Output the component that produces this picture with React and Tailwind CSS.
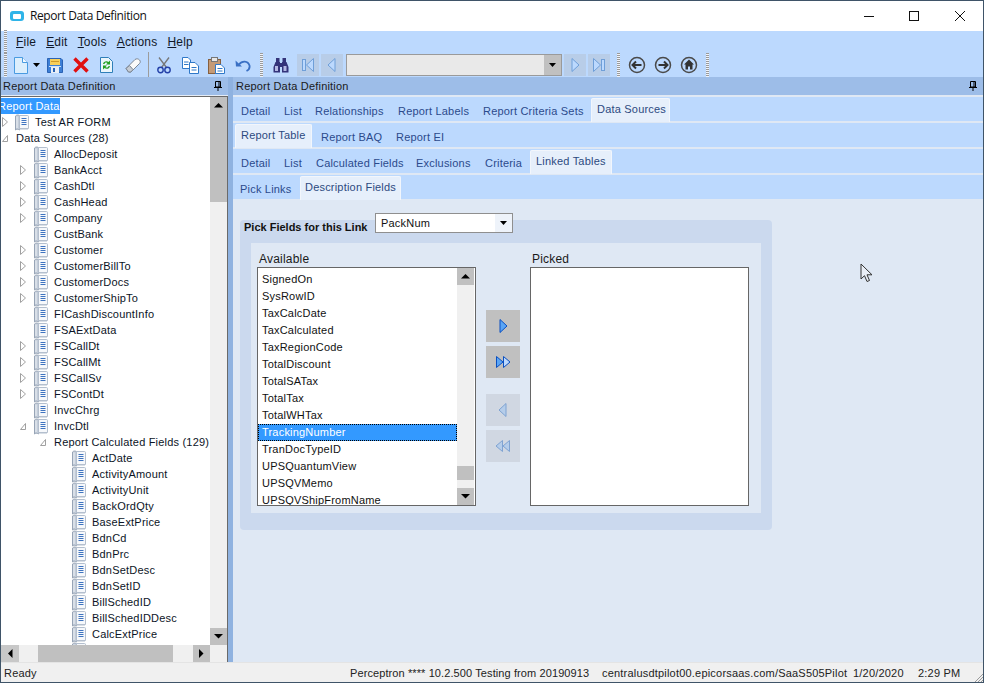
import React from "react";

// tree rows: kind picks indent, exp = closed/open/none
const treeRows = [
  ["l0", "Test AR FORM", "closed"],
  ["l1", "Data Sources (28)", "open"],
  ["l2", "AllocDeposit", ""],
  ["l2", "BankAcct", "closed"],
  ["l2", "CashDtl", "closed"],
  ["l2", "CashHead", "closed"],
  ["l2", "Company", "closed"],
  ["l2", "CustBank", ""],
  ["l2", "Customer", "closed"],
  ["l2", "CustomerBillTo", "closed"],
  ["l2", "CustomerDocs", "closed"],
  ["l2", "CustomerShipTo", "closed"],
  ["l2", "FICashDiscountInfo", ""],
  ["l2", "FSAExtData", ""],
  ["l2", "FSCallDt", "closed"],
  ["l2", "FSCallMt", "closed"],
  ["l2", "FSCallSv", "closed"],
  ["l2", "FSContDt", "closed"],
  ["l2", "InvcChrg", ""],
  ["l2", "InvcDtl", "open"],
  ["l3", "Report Calculated Fields (129)", "open"],
  ["l4", "ActDate", ""],
  ["l4", "ActivityAmount", ""],
  ["l4", "ActivityUnit", ""],
  ["l4", "BackOrdQty", ""],
  ["l4", "BaseExtPrice", ""],
  ["l4", "BdnCd", ""],
  ["l4", "BdnPrc", ""],
  ["l4", "BdnSetDesc", ""],
  ["l4", "BdnSetID", ""],
  ["l4", "BillSchedID", ""],
  ["l4", "BillSchedIDDesc", ""],
  ["l4", "CalcExtPrice", ""],
  ["l4", "", ""],
];

const available = [
  "SignedOn",
  "SysRowID",
  "TaxCalcDate",
  "TaxCalculated",
  "TaxRegionCode",
  "TotalDiscount",
  "TotalSATax",
  "TotalTax",
  "TotalWHTax",
  "TrackingNumber",
  "TranDocTypeID",
  "UPSQuantumView",
  "UPSQVMemo",
  "UPSQVShipFromName",
];

const Grip = ({ className = "" }) => (
  <div className={"w-[3px] h-[24px] flex-none bg-[repeating-linear-gradient(#9a9a9a_0_1px,#eef3fb_1px_2px)] " + className} />
);

function Expander({ type }) {
  if (type === "closed")
    return (
      <svg width="6" height="10" viewBox="0 0 6 10" className="flex-none">
        <path d="M.5.5 5.5 5 .5 9.500Z" fill="#fff" stroke="#a0a0a0" />
      </svg>
    );
  if (type === "open")
    return (
      <svg width="6" height="10" viewBox="0 0 6 10" className="flex-none">
        <path d="M5.500 2.500V8.500H.5Z" fill="#fff" stroke="#a0a0a0" />
      </svg>
    );
  return <div className="w-[6px] flex-none" />;
}

const BookIcon = () => (
  <svg width="16" height="17" viewBox="0 0 16 17" className="flex-none">
    <path d="M1.500 2C2.500 .8 4 .8 5.500 1.500V16C4 15 2.500 15 1.500 16Z" fill="#c3ccd8" stroke="#97a4b6" />
    <path d="M3 2.500V14" stroke="#eef2f7" />
    <path d="M5.500 1.500H13.500C14.500 1.500 14.500 2 14.500 3V14.500H5.500Z" fill="#f6f8fb" stroke="#b4bfce" />
    <path d="M7.500 4.500H12.500M7.500 6.500H12.500M7.500 8.500H12.500M7.500 10.500H12.500" stroke="#3f74c0" />
    <path d="M5 15H14" stroke="#b4bfce" />
  </svg>
);

function TreeRow({ kind, label, exp }) {
  return (
    <div className="flex items-center h-[16px] leading-[16px] whitespace-nowrap">
      {kind === "l0" && (
        <>
          <div className="ml-[1px]"><Expander type={exp} /></div>
          <div className="ml-[6px] mr-[5px]"><BookIcon /></div>
        </>
      )}
      {kind === "l1" && (
        <>
          <div className="ml-[1px] mr-[8px]"><Expander type={exp} /></div>
        </>
      )}
      {kind === "l2" && (
        <>
          <div className="ml-[19px]"><Expander type={exp} /></div>
          <div className="ml-[7px] mr-[5px]"><BookIcon /></div>
        </>
      )}
      {kind === "l3" && (
        <div className="ml-[39px] mr-[8px]"><Expander type={exp} /></div>
      )}
      {kind === "l4" && (
        <div className="ml-[70px] mr-[5px]"><BookIcon /></div>
      )}
      <span className="text-[#0c1426]">{label}</span>
    </div>
  );
}

const Arrow = ({ dir }) => {
  const d = {
    up: "M0 4.500 4.500 0 9 4.500Z",
    down: "M0 0H9L4.500 4.500Z",
    left: "M4.500 0V9L0 4.500Z",
    right: "M0 0V9L4.500 4.500Z",
  }[dir];
  const tall = dir === "left" || dir === "right";
  return (
    <svg width={tall ? 5 : 9} height={tall ? 9 : 5} viewBox={tall ? "0 0 5 9" : "0 0 9 5"}>
      <path d={d} fill="#000" />
    </svg>
  );
};

function NavBox({ kind }) {
  return (
    <div className="w-[22px] h-[22px] flex-none flex items-center justify-center bg-[#b8cde8]">
      <svg width="16" height="16" viewBox="0 0 16 16" fill="#bcd9fe" stroke="#6f9fd8">
        {kind === "first" && <><rect x="2.500" y="2.500" width="3" height="11" /><path d="M13.500 1.500V14.500L6.500 8Z" /></>}
        {kind === "prev" && <path d="M11 1.500V14.500L4 8Z" />}
        {kind === "next" && <path d="M5 1.500V14.500L12 8Z" />}
        {kind === "last" && <><path d="M2.500 1.500V14.500L9.500 8Z" /><rect x="10.500" y="2.500" width="3" height="11" /></>}
      </svg>
    </div>
  );
}

function RoundIcon({ kind }) {
  return (
    <div className="w-[26px] flex-none flex justify-center">
      <svg width="18" height="18" viewBox="0 0 18 18">
        <circle cx="9" cy="9" r="7.500" fill="none" stroke="#4a4a4a" strokeWidth="1.500" />
        {kind === "back" && <path d="M13.500 9H5M8 5.500 4.500 9 8 12.500" fill="none" stroke="#333" strokeWidth="2" />}
        {kind === "fwd" && <path d="M4.500 9H13M10 5.500 13.500 9 10 12.500" fill="none" stroke="#333" strokeWidth="2" />}
        {kind === "home" && <path d="M9 3.500 14 8.500H12.500V13.500H10V10.500H8V13.500H5.500V8.500H4Z" fill="#333" />}
      </svg>
    </div>
  );
}

function Toolbar() {
  return (
    <div className="flex items-center h-[24px] pl-[3px]">
      <Grip />
      <div className="ml-[3px] w-[22px] flex-none flex justify-center">
        <svg width="14" height="17" viewBox="0 0 14 17">
          <path d="M.5.5H8.500L13.500 5.500V16.500H.5Z" fill="#dceefc" stroke="#4a9be0" />
          <path d="M8.500.5V5.500H13.500" fill="#f4faff" stroke="#4a9be0" />
        </svg>
      </div>
      <div className="w-[9px] flex-none flex justify-center"><svg width="7" height="4" viewBox="0 0 7 4"><path d="M0 0H7L3.500 4Z" fill="#000" /></svg></div>
      <div className="w-[27px] flex-none flex justify-center">
        <svg width="16" height="15" viewBox="0 0 16 15">
          <path d="M.5.5H14L15.500 2V14.500H.5Z" fill="#3c7fd6" stroke="#2a62b4" />
          <rect x="3" y="1" width="10" height="6" fill="#f8cf5a" />
          <rect x="4" y="3" width="8" height="1" fill="#d09a28" />
          <rect x="2" y="8" width="12" height="1" fill="#cfe2f8" />
          <rect x="4" y="9" width="8" height="6" fill="#e8eef6" />
          <rect x="6" y="10" width="2" height="4" fill="#2a62b4" />
        </svg>
      </div>
      <div className="w-[25px] flex-none flex justify-center">
        <svg width="16" height="16" viewBox="0 0 16 16"><path d="M1.500 1.500 14.500 14.500M14.500 1.500 1.500 14.500" stroke="#e01010" strokeWidth="3.400" /></svg>
      </div>
      <div className="w-[27px] flex-none flex justify-center">
        <svg width="13" height="16" viewBox="0 0 13 16">
          <path d="M.5.5H8.500L12.500 4.500V15.500H.5Z" fill="#eaf5fb" stroke="#2f7fb8" />
          <path d="M3 7C3.500 4 7 3.500 8.500 5L10 3.500V7.500H6L7.500 6C6.500 5 4.500 5.500 4.500 7Z" fill="#23a023" />
          <path d="M10 9C9.500 12 6 12.500 4.500 11L3 12.500V8.500H7L5.500 10C6.500 11 8.500 10.500 8.500 9Z" fill="#23a023" />
        </svg>
      </div>
      <div className="w-[26px] flex-none flex justify-center">
        <svg width="16" height="15" viewBox="0 0 16 15">
          <path d="M1 10.500 10 1.500C11.500 .5 13 .5 14.500 2C15.500 3 15.500 4.500 14.500 5.500L6 14H3.500Z" fill="#fafafa" stroke="#7b8694" />
          <path d="M1 10.500 4.500 7.500 8 11.500 6 14H3.500Z" fill="#c6ccd4" stroke="#7b8694" />
        </svg>
      </div>
      <div className="ml-[2px] w-[1px] h-[26px] flex-none bg-[#9c9c9c]" />
      <div className="ml-[2px] w-[26px] flex-none flex justify-center">
        <svg width="14" height="17" viewBox="0 0 14 17" fill="none">
          <path d="M2 .5 9.500 10.500M12 .5 4.500 10.500" stroke="#777" strokeWidth="1.300" />
          <circle cx="3.500" cy="13" r="2.700" stroke="#2340a8" strokeWidth="1.400" />
          <circle cx="10.500" cy="13" r="2.700" stroke="#2340a8" strokeWidth="1.400" />
        </svg>
      </div>
      <div className="w-[26px] flex-none flex justify-center">
        <svg width="17" height="17" viewBox="0 0 17 17">
          <path d="M.5.5H6L8.500 3V11.500H.5Z" fill="#fff" stroke="#2f78c8" />
          <path d="M7.500 5.500H13L16.500 9V16.500H7.500Z" fill="#fff" stroke="#2f78c8" />
          <path d="M9.500 10.500H14.500M9.500 13H14.500M2 5H6.500M2 7.500H6.500" stroke="#2f78c8" />
        </svg>
      </div>
      <div className="w-[27px] flex-none flex justify-center">
        <svg width="17" height="17" viewBox="0 0 17 17">
          <rect x=".5" y="2.500" width="12" height="14" fill="#c49a76" stroke="#86603f" />
          <rect x="3.500" y=".5" width="6" height="4" fill="#e6e6e6" stroke="#777" />
          <path d="M7.500 7.500H13L16.500 11V16.500H7.500Z" fill="#fff" stroke="#2f78c8" />
          <path d="M9.500 11.500H14.500M9.500 14H14.500" stroke="#2f78c8" />
        </svg>
      </div>
      <div className="w-[26px] flex-none flex justify-center">
        <svg width="16" height="13" viewBox="0 0 16 13" fill="none">
          <path d="M4 5.500C7 1.500 13 1.500 14.500 6.500C15 9 13.500 11 11.500 12" stroke="#3a70c4" strokeWidth="1.800" />
          <path d="M.5 1.500 1 7.500H7Z" fill="#3a70c4" />
        </svg>
      </div>
      <Grip className="ml-[4px]" />
      <div className="ml-[5px] w-[26px] flex-none flex justify-center">
        <svg width="16" height="15" viewBox="0 0 16 15" fill="#33337a">
          <rect x="3" y="0" width="3.500" height="4" />
          <rect x="9.500" y="0" width="3.500" height="4" />
          <path d="M2.500 4H7V14.500H.5V9ZM9 4H13.500L15.500 9V14.500H9Z" />
          <rect x="7" y="5" width="2" height="4" />
          <rect x="2" y="8" width="3" height="5" fill="#b4b8e4" />
          <rect x="10.500" y="8" width="3" height="5" fill="#b4b8e4" />
        </svg>
      </div>
      <div className="ml-[3px]"><NavBox kind="first" /></div>
      <div className="ml-[2px]"><NavBox kind="prev" /></div>
      <div className="ml-[3px] w-[216px] h-[22px] flex-none flex border border-[#9a9a9a] bg-[#e9e9e9]">
        <div className="flex-1" />
        <div className="w-[17px] bg-[#c0c0c0] flex items-center justify-center"><svg width="7" height="4" viewBox="0 0 7 4"><path d="M0 0H7L3.500 4Z" fill="#000" /></svg></div>
      </div>
      <div className="ml-[2px]"><NavBox kind="next" /></div>
      <div className="ml-[2px]"><NavBox kind="last" /></div>
      <Grip className="ml-[7px]" />
      <div className="ml-[4px]"><RoundIcon kind="back" /></div>
      <RoundIcon kind="fwd" />
      <RoundIcon kind="home" />
      <Grip className="ml-[4px]" />
    </div>
  );
}

const Pin = () => (
  <svg width="8" height="10" viewBox="0 0 8 10">
    <path d="M1.500.5H6.500V6H1.500Z" fill="none" stroke="#000" />
    <path d="M0 6H8V7H0ZM3.500 7H4.500V10H3.500ZM4.500 1H5.500V6H4.500Z" fill="#000" />
  </svg>
);

function Tab({ label, w, active }) {
  if (active)
    return (
      <div className={"h-[24px] mt-[1px] flex-none px-[5px] pt-[2px] leading-[16px] rounded-t-[2px] bg-[#e6effb] text-[#2c4a80] whitespace-nowrap border-t border-x border-[#f2f6fc] " + w}>
        {label}
      </div>
    );
  return (
    <div className={"h-[24px] flex-none px-[6px] pt-[6px] leading-[16px] text-[#2b4a8c] whitespace-nowrap " + w}>
      {label}
    </div>
  );
}

const TabRow = ({ className = "", children }) => (
  <div className={"h-[24px] flex-none flex bg-[#bcd9fe] " + className}>{children}</div>
);

function SideButton({ kind }) {
  const on = kind === "r" || kind === "rr";
  return (
    <div className={"w-[34px] h-[32px] flex items-center justify-center " + (on ? "bg-[#c0c0c0]" : "bg-[#d0d7e2]")}>
      <svg width="16" height="16" viewBox="0 0 16 16" fill={on ? "#5aa5f5" : "#b5cdea"} stroke={on ? "#0a4fc0" : "#7fa3d2"}>
        {kind === "r" && <path d="M5 1.500V14.500L12 8Z" />}
        {kind === "rr" && <><path d="M1.500 2.500V13.500L8 8Z" /><path d="M8.500 2.500V13.500L15 8Z" fill="#bcd9fe" /></>}
        {kind === "l" && <path d="M11 1.500V14.500L4 8Z" />}
        {kind === "ll" && <><path d="M7.500 2.500V13.500L1 8Z" /><path d="M14.500 2.500V13.500L8 8Z" /></>}
      </svg>
    </div>
  );
}

const ListButton = ({ dir, className = "" }) => (
  <div className={"w-[17px] h-[17px] flex-none bg-[#c0c0c0] flex items-center justify-center " + className}>
    <Arrow dir={dir} />
  </div>
);

export default function App() {
  return (
    <div className="relative w-[984px] h-[683px] flex flex-col overflow-hidden border border-[#3f5468] bg-white text-[11px] tracking-[0.2px] text-black font-['Liberation_Sans',Arial,sans-serif]">
      {/* title bar */}
      <div className="h-[30px] flex-none flex items-center bg-white">
        <div className="ml-[9px] w-[14px] h-[10px] rounded-[3px] bg-[#2fb4e8] flex items-center justify-center">
          <div className="w-[8px] h-[5px] rounded-[1px] bg-white" />
        </div>
        <span className="ml-[6px] text-[12px] text-[#111] font-['Open_Sans',sans-serif] tracking-[-0.4px]">Report Data Definition</span>
        <div className="ml-auto flex items-center">
          <svg width="10" height="10" viewBox="0 0 10 10" className="mr-[35px]"><path d="M0 5.500H10" stroke="#111" /></svg>
          <svg width="10" height="10" viewBox="0 0 10 10" className="mr-[36px]"><rect x=".5" y=".5" width="9" height="9" fill="none" stroke="#111" /></svg>
          <svg width="10" height="10" viewBox="0 0 10 10" className="mr-[18px]"><path d="M0 0 10 10M10 0 0 10" stroke="#111" strokeWidth="1" /></svg>
        </div>
      </div>

      {/* menu + toolbar */}
      <div className="h-[46px] flex-none flex flex-col bg-[#bcd9fe]">
        <div className="h-[22px] flex items-center pl-[3px] text-[12px] text-[#101828] tracking-[0.2px]">
          <Grip className="h-[22px]" />
          <div className="ml-[9px] flex gap-[10px]">
            <span><u>F</u>ile</span>
            <span><u>E</u>dit</span>
            <span><u>T</u>ools</span>
            <span><u>A</u>ctions</span>
            <span><u>H</u>elp</span>
          </div>
        </div>
        <Toolbar />
      </div>

      {/* main area */}
      <div className="flex-1 min-h-0 flex">
        {/* left panel */}
        <div className="w-[227px] flex-none flex flex-col bg-[#f0f0f0]">
          <div className="h-[18px] flex-none flex items-center justify-between pl-[2px] pr-[6px] bg-[#9dbde8] text-[#1a1a1a]">
            <span>Report Data Definition</span>
            <Pin />
          </div>
          <div className="h-[1px] flex-none bg-[#e5ecf6]" />
          <div className="flex-1 min-h-0 flex flex-col border-t border-r border-[#6a6a6a]">
            <div className="flex-1 min-h-0 flex">
              <div className="flex-1 min-w-0 overflow-hidden bg-white pt-[1px]">
                <div className="h-[16px] w-[59px] bg-[#3399ff] text-white leading-[16px] overflow-hidden whitespace-nowrap">
                  <span className="-ml-[3px] inline-block">Report Data</span>
                </div>
                {treeRows.map(([kind, label, exp], i) => (
                  <TreeRow key={i} kind={kind} label={label} exp={exp} />
                ))}
              </div>
              <div className="w-[17px] flex-none flex flex-col bg-[#f0f0f0]">
                <ListButton dir="up" />
                <div className="h-[88px] bg-[#c0c0c0]" />
                <div className="flex-1" />
                <ListButton dir="down" />
              </div>
            </div>
            <div className="h-[17px] flex-none flex bg-[#f0f0f0]">
              <div className="w-[18px] bg-[#c8c8c8] flex items-center justify-center"><Arrow dir="left" /></div>
              <div className="w-[19px]" />
              <div className="w-[135px] bg-[#c0c0c0]" />
              <div className="w-[20px]" />
              <div className="w-[17px] bg-[#c0c0c0] flex items-center justify-center"><Arrow dir="right" /></div>
            </div>
          </div>
        </div>
        {/* splitter */}
        <div className="w-[5px] flex-none bg-[#8fb2e0]" />

        {/* right panel */}
        <div className="flex-1 min-w-0 flex flex-col bg-[#dfe8f4]">
          <div className="h-[18px] flex-none flex items-center justify-between pl-[3px] pr-[6px] bg-[#9dbde8] text-[#1a1a1a]">
            <span>Report Data Definition</span>
            <Pin />
          </div>
          <div className="flex-none flex flex-col gap-[2px] pt-[2px]">
            <TabRow className="pl-[2px]">
              <Tab label="Detail" w="w-[43px]" />
              <Tab label="List" w="w-[31px]" />
              <Tab label="Relationships" w="w-[83px]" />
              <Tab label="Report Labels" w="w-[85px]" />
              <Tab label="Report Criteria Sets" w="w-[114px]" />
              <Tab label="Data Sources" w="w-[79px]" active />
            </TabRow>
            <TabRow className="pl-[2px]">
              <Tab label="Report Table" w="w-[77px]" active />
              <div className="w-[3px]" />
              <Tab label="Report BAQ" w="w-[75px]" />
              <Tab label="Report EI" w="w-[60px]" />
            </TabRow>
            <TabRow className="pl-[2px]">
              <Tab label="Detail" w="w-[43px]" />
              <Tab label="List" w="w-[32px]" />
              <Tab label="Calculated Fields" w="w-[100px]" />
              <Tab label="Exclusions" w="w-[69px]" />
              <Tab label="Criteria" w="w-[51px]" />
              <Tab label="Linked Tables" w="w-[82px]" active />
            </TabRow>
            <TabRow className="pl-[1px]">
              <Tab label="Pick Links" w="w-[66px]" />
              <Tab label="Description Fields" w="w-[101px] !pl-[4px]" active />
            </TabRow>
          </div>

          {/* pick fields group */}
          <div className="ml-[7px] mt-[21px] w-[532px] h-[310px] rounded-[4px] bg-[#cbd9ee] flex flex-col">
            <div className="h-[23px] flex-none flex items-start">
              <div className="ml-[4px] w-[131px] flex-none h-[16px] leading-[14px] font-bold tracking-normal text-[#111] whitespace-nowrap">Pick Fields for this Link</div>
              <div className="-mt-[7px] w-[138px] h-[20px] flex-none flex items-center border border-[#8f8f8f] bg-white pl-[5px] text-[#111]">
                <span className="flex-1">PackNum</span>
                <div className="w-[17px] h-full flex items-center justify-center bg-[#eef3fa]"><svg width="7" height="4" viewBox="0 0 7 4"><path d="M0 0H7L3.500 4Z" fill="#000" /></svg></div>
              </div>
            </div>
            <div className="mx-[11px] h-[270px] flex-none bg-[#dfe8f4] flex pl-[6px] pt-[9px] text-[12px]">
              <div className="w-[219px] flex-none flex flex-col">
                <div className="h-[15px] leading-[15px] pl-[2px] text-[#1a1a1a]">Available</div>
                <div className="h-[239px] flex-none flex border border-[#666] bg-white text-[11px]">
                  <div className="flex-1 min-w-0 overflow-hidden">
                    <div className="pt-[3px]">
                      {available.map((name) =>
                        name === "TrackingNumber" ? (
                          <div key={name} className="h-[17px] leading-[15px] pl-[3px] bg-[#3399ff] text-white border border-dotted border-black">{name}</div>
                        ) : (
                          <div key={name} className="h-[17px] leading-[17px] pl-[4px] text-[#111] whitespace-nowrap">{name}</div>
                        )
                      )}
                    </div>
                  </div>
                  <div className="w-[17px] mr-[1px] flex-none flex flex-col bg-[#f0f0f0]">
                    <ListButton dir="up" />
                    <div className="h-[181px] flex-none" />
                    <div className="h-[14px] flex-none bg-[#c0c0c0]" />
                    <div className="flex-1" />
                    <ListButton dir="down" />
                  </div>
                </div>
              </div>
              <div className="w-[54px] flex-none flex flex-col pl-[10px] pt-[58px]">
                <SideButton kind="r" />
                <div className="mt-[4px]"><SideButton kind="rr" /></div>
                <div className="mt-[16px]"><SideButton kind="l" /></div>
                <div className="mt-[4px]"><SideButton kind="ll" /></div>
              </div>
              <div className="w-[219px] flex-none flex flex-col">
                <div className="h-[15px] leading-[15px] pl-[2px] text-[#1a1a1a]">Picked</div>
                <div className="h-[239px] flex-none border border-[#666] bg-white" />
              </div>
            </div>
          </div>
        </div>
      </div>

      {/* status bar */}
      <div className="relative h-[20px] flex-none flex items-center pt-[1px] bg-[#f0f0f0] border-t border-[#e4e4e4] text-[#222] whitespace-nowrap">
        <span className="ml-[3px] w-[346px] flex-none">Ready</span>
        <span className="w-[252px] flex-none tracking-[0.1px]">Perceptron **** 10.2.500 Testing from 20190913</span>
        <span className="w-[251px] flex-none">centralusdtpilot00.epicorsaas.com/SaaS505Pilot</span>
        <span className="w-[65px] flex-none">1/20/2020</span>
        <span>2:29 PM</span>
        <svg width="9" height="9" viewBox="0 0 9 9" className="absolute right-0 bottom-0">
          <path d="M9 1 1 9M9 4 4 9M9 7 7 9" stroke="#9a9a9a" />
        </svg>
      </div>

      {/* mouse cursor */}
      <svg width="13" height="20" viewBox="0 0 13 20" className="absolute left-[859px] top-[262px]">
        <path d="M1 1V16L4.500 12.700 7 18.500 9.500 17.500 7 11.800H12Z" fill="#e9eef6" stroke="#333" />
      </svg>
    </div>
  );
}
